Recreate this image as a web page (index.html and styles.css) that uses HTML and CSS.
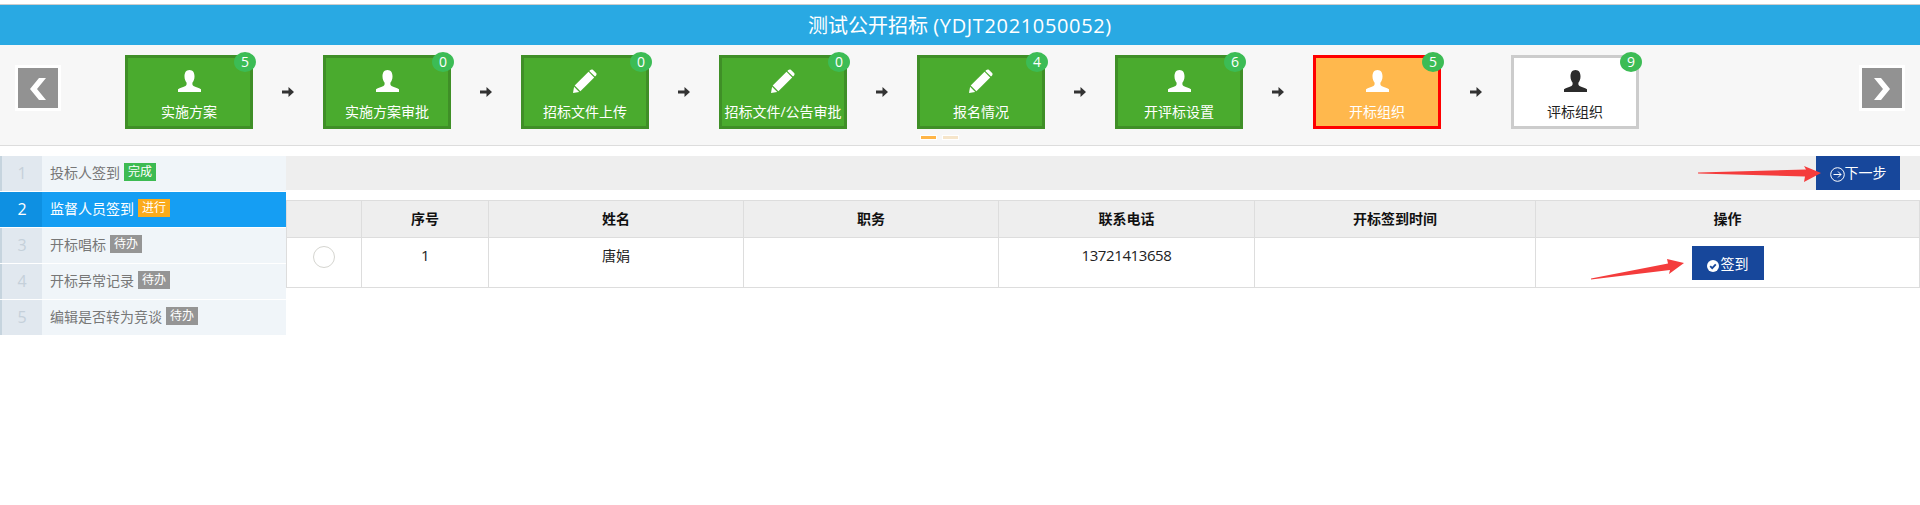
FILE: index.html
```html
<!DOCTYPE html>
<html lang="zh-CN">
<head>
    <meta charset="UTF-8">
    <meta name="viewport" content="width=device-width, initial-scale=1.0">
    <title>测试公开招标</title>
    <link rel="stylesheet" href="styles.css">
</head>
<body>

    <svg width="0" height="0" class="defs">
        <symbol id="i-user" viewBox="0 0 23 22">
            <path d="M11.500 0C8 0 6.500 2.800 6.500 6.400c0 2.800 1 4.700 2 6.200.3 1.400.2 2.700-1 3.300C5.600 16.900 2 17.700 0 19.300V22h23v-2.700c-2-1.600-5.600-2.400-7.500-3.400-1.200-.6-1.300-1.900-1-3.300 1-1.500 2-3.400 2-6.200C16.500 2.800 15 0 11.500 0z"/>
        </symbol>
        <symbol id="i-pencil" viewBox="0 0 24 24">
            <path d="M15.500 2.800l5.700 5.700L7.400 22.300 1.700 16.600z"/>
            <path d="M17.300 1.100c.8-.8 1.800-.9 2.500-.3l3.300 3.300c.7.700.6 1.800-.2 2.600l-.9.900-5.700-5.700z"/>
            <path d="M1.100 17.800l5.100 5.100L0 24z"/>
        </symbol>
        <symbol id="i-arrow" viewBox="0 0 12 10">
            <path d="M0 3.500h6.500V0L12 5l-5.500 5V6.500H0z"/>
        </symbol>
    </svg>

    <div class="title">测试公开招标 <span class="code">(YDJT2021050052)</span></div>

    <div class="flow">
        <div class="flow-row">
            <a class="nav-btn nav-prev">
                <svg width="40" height="40" viewBox="0 0 40 40"><polygon points="21,10 28,10 19,21 28,32 21,32 12,21"/></svg>
            </a>
            <div class="steps">
                <div class="step done">
                    <span class="count">5</span>
                    <svg class="ico-user"><use href="#i-user"/></svg>
                    <span class="step-name">实施方案</span>
                </div>
                <svg class="next-arrow"><use href="#i-arrow"/></svg>
                <div class="step done">
                    <span class="count">0</span>
                    <svg class="ico-user"><use href="#i-user"/></svg>
                    <span class="step-name">实施方案审批</span>
                </div>
                <svg class="next-arrow"><use href="#i-arrow"/></svg>
                <div class="step done">
                    <span class="count">0</span>
                    <svg class="ico-pencil"><use href="#i-pencil"/></svg>
                    <span class="step-name">招标文件上传</span>
                </div>
                <svg class="next-arrow"><use href="#i-arrow"/></svg>
                <div class="step done">
                    <span class="count">0</span>
                    <svg class="ico-pencil"><use href="#i-pencil"/></svg>
                    <span class="step-name">招标文件/公告审批</span>
                </div>
                <svg class="next-arrow"><use href="#i-arrow"/></svg>
                <div class="step done">
                    <span class="count">4</span>
                    <svg class="ico-pencil"><use href="#i-pencil"/></svg>
                    <span class="step-name">报名情况</span>
                </div>
                <svg class="next-arrow"><use href="#i-arrow"/></svg>
                <div class="step done">
                    <span class="count">6</span>
                    <svg class="ico-user"><use href="#i-user"/></svg>
                    <span class="step-name">开评标设置</span>
                </div>
                <svg class="next-arrow"><use href="#i-arrow"/></svg>
                <div class="step current">
                    <span class="count">5</span>
                    <svg class="ico-user"><use href="#i-user"/></svg>
                    <span class="step-name">开标组织</span>
                </div>
                <svg class="next-arrow"><use href="#i-arrow"/></svg>
                <div class="step todo">
                    <span class="count">9</span>
                    <svg class="ico-user"><use href="#i-user"/></svg>
                    <span class="step-name">评标组织</span>
                </div>
            </div>
            <a class="nav-btn nav-next">
                <svg width="40" height="40" viewBox="0 0 40 40"><polygon points="19,10 12,10 21,21 12,32 19,32 28,21"/></svg>
            </a>
        </div>
        <div class="pager">
            <span class="dot on"></span>
            <span class="dot"></span>
        </div>
    </div>

    <div class="main">
        <ul class="side">
            <li><span class="num">1</span><span class="name">投标人签到</span><span class="tag tag-ok">完成</span></li>
            <li class="active"><span class="num">2</span><span class="name">监督人员签到</span><span class="tag tag-run">进行</span></li>
            <li><span class="num">3</span><span class="name">开标唱标</span><span class="tag tag-wait">待办</span></li>
            <li><span class="num">4</span><span class="name">开标异常记录</span><span class="tag tag-wait">待办</span></li>
            <li><span class="num">5</span><span class="name">编辑是否转为竞谈</span><span class="tag tag-wait">待办</span></li>
        </ul>

        <div class="content">
            <div class="toolbar">
                <button type="button" class="btn btn-next">
                    <svg width="15" height="15" viewBox="0 0 15 15" fill="none" stroke="#fff">
                        <circle cx="7.500" cy="7.500" r="6.800"/>
                        <path d="M3.500 7.500h7.500M8 4.500l3 3-3 3"/>
                    </svg><span>下一步</span>
                </button>
            </div>
            <table class="grid">
                <colgroup>
                    <col class="c-radio"><col class="c-no"><col class="c-name"><col class="c-job"><col class="c-tel"><col class="c-time"><col>
                </colgroup>
                <thead>
                    <tr>
                        <th></th>
                        <th>序号</th>
                        <th>姓名</th>
                        <th>职务</th>
                        <th>联系电话</th>
                        <th>开标签到时间</th>
                        <th>操作</th>
                    </tr>
                </thead>
                <tbody>
                    <tr>
                        <td><span class="radio"></span></td>
                        <td class="digits">1</td>
                        <td>唐娟</td>
                        <td></td>
                        <td class="digits">13721413658</td>
                        <td></td>
                        <td>
                            <button type="button" class="btn btn-sign">
                                <svg width="12" height="12" viewBox="0 0 12 12">
                                    <circle cx="6" cy="6" r="6" fill="#fff"/>
                                    <path d="M3.200 6.200l2 2 3.600-3.800" fill="none" stroke="#17479b" stroke-width="1.800"/>
                                </svg><span>签到</span>
                            </button>
                        </td>
                    </tr>
                </tbody>
            </table>
        </div>
    </div>

    <!-- red arrows drawn over the page -->
    <svg class="marks" width="1920" height="505" viewBox="0 0 1920 505">
        <polygon points="1698,172.500 1806,169.500 1804,166 1821,173 1804,182 1805,176.500 1698,173.500"/>
        <polygon points="1591,278.500 1668,263.500 1667,259 1684,263 1669,274 1670,270 1591,279.500"/>
    </svg>

</body>
</html>
```

FILE: styles.css
```css
* {
    margin: 0;
    padding: 0;
    box-sizing: border-box;
}
body {
    position: relative;
    padding-top: 4px;
    background: #fff;
    font-family: "Open Sans", "Noto Sans CJK SC", sans-serif;
    font-size: 14px;
    color: #222;
}

.defs {
    position: absolute;
}

.title {
    height: 41px;
    border-top: 1px solid #ccc;
    background: #29a9e3;
    color: #fff;
    font-size: 20px;
    line-height: 42px;
    text-align: center;
}
.title .code {
    letter-spacing: .65px;
}

/* step strip */
.flow {
    height: 101px;
    padding-top: 10px;
    background: #f7f7f7;
    border-bottom: 1px solid #ddd;
}
.flow-row {
    display: flex;
    padding: 0 15px;
}
.nav-btn {
    width: 46px;
    height: 46px;
    margin-top: 10px;
    border: 3px solid #fff;
    background: #929292;
    flex: none;
}
.nav-btn svg {
    display: block;
    fill: #fff;
}
.steps {
    display: flex;
    align-items: center;
    margin-left: 64px;
}
.nav-next {
    margin-left: auto;
}
.step {
    position: relative;
    display: flex;
    flex-direction: column;
    align-items: center;
    width: 128px;
    height: 74px;
    padding-top: 12px;
    border: 3px solid;
    fill: #fff;
    color: #fff;
}
.step.done {
    background: #4aab2e;
    border-color: #3f8f27;
}
.step.current {
    background: #ffb84d;
    border-color: #f00;
}
.step.todo {
    background: #fff;
    border-color: #ccc;
    fill: #2b2b2b;
    color: #222;
}
.ico-user {
    width: 23px;
    height: 22px;
    margin-bottom: 10px;
}
.ico-pencil {
    width: 24px;
    height: 24px;
    margin-top: -1px;
    margin-bottom: 9px;
}
.step-name {
    line-height: 20px;
    white-space: nowrap;
}
.count {
    position: absolute;
    top: -6px;
    right: -6px;
    width: 22px;
    height: 20px;
    border-radius: 50%;
    background: #3cbc55;
    color: #fff;
    font-size: 14px;
    line-height: 20px;
    text-align: center;
}
.next-arrow {
    width: 12px;
    height: 10px;
    margin: 0 29px;
    fill: #333;
}
.pager {
    display: flex;
    gap: 5px;
    padding-left: 920px;
    margin-top: 6px;
}
.dot {
    width: 17px;
    height: 5px;
    background: #f6e5ca;
    border: 1px solid #fff;
}
.dot.on {
    background: #ffb547;
}

/* lower part */
.main {
    display: flex;
    margin-top: 10px;
}
.side {
    width: 286px;
    flex: none;
    list-style: none;
}
.side li {
    display: flex;
    align-items: center;
    height: 35px;
    margin-bottom: 1px;
    background: #f0f5f9;
    color: #777;
}
.side .num {
    width: 42px;
    height: 100%;
    margin-right: 8px;
    background: #e1e8ef;
    border-left: 2px solid #c6d4de;
    color: #c5d0da;
    font-size: 16px;
    line-height: 35px;
    text-align: center;
}
.side .name {
    margin-bottom: 3px;
}
.side .active {
    background: #159ef3;
    color: #fff;
}
.side .active .num {
    background: #0e90e2;
    border-left-color: #0e90e2;
    color: #fff;
}
.tag {
    height: 18px;
    margin-left: 4px;
    margin-bottom: 3px;
    padding: 0 4px;
    color: #fff;
    font-size: 12px;
    line-height: 18px;
}
.tag-ok {
    background: #3dbb52;
}
.tag-run {
    background: #fbab1c;
}
.tag-wait {
    background: #959595;
}

.content {
    flex: 1;
}
.toolbar {
    display: flex;
    justify-content: flex-end;
    height: 34px;
    padding-right: 20px;
    background: #eee;
}
.btn {
    display: flex;
    align-items: center;
    justify-content: center;
    height: 34px;
    border: none;
    background: #17479b;
    color: #fff;
    font-family: inherit;
    font-size: 14px;
}
.btn-next {
    width: 84px;
}
.btn-next svg {
    margin-top: 3px;
}
.btn-next span {
    margin-bottom: 2px;
}
.btn-sign {
    width: 72px;
    margin: 0 auto;
    gap: 2px;
}
.btn-sign svg {
    margin-top: 6px;
}

.grid {
    width: 100%;
    margin-top: 10px;
    table-layout: fixed;
    border-collapse: collapse;
}
.grid th, .grid td {
    border: 1px solid #ddd;
    text-align: center;
    font-size: 14px;
}
.grid th {
    height: 37px;
    padding-bottom: 2px;
    background: #eee;
    color: #111;
    font-weight: bold;
}
.grid td {
    height: 50px;
    padding-top: 8px;
    vertical-align: top;
    line-height: 20px;
}
.grid .digits {
    font-size: 15px;
    letter-spacing: -.4px;
    line-height: 18px;
}
.c-radio { width: 75px; }
.c-no { width: 127px; }
.c-name { width: 255px; }
.c-job { width: 255px; }
.c-tel { width: 256px; }
.c-time { width: 281px; }
.radio {
    display: block;
    width: 22px;
    height: 22px;
    margin: 0 auto;
    border: 1px solid #d5d5d0;
    border-radius: 50%;
}

.marks {
    position: absolute;
    top: 0;
    left: 0;
    fill: #f43c3c;
    pointer-events: none;
}
```
